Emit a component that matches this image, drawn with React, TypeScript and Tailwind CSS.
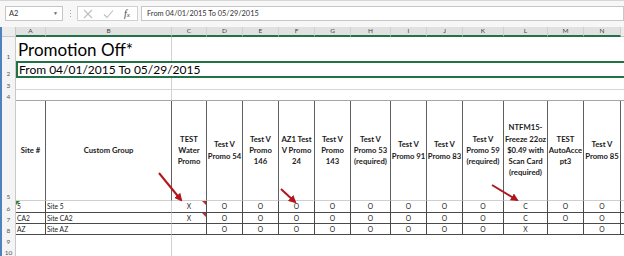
import React from 'react'

const COLS = ['A', 'B', 'C', 'D', 'E', 'F', 'G', 'H', 'I', 'J', 'K', 'L', 'M', 'N', 'O']

// header text of row 5
const HEADERS: Record<string, string> = {
  A: 'Site #',
  B: 'Custom Group',
  C: 'TEST\nWater\nPromo',
  D: 'Test V\nPromo 54',
  E: 'Test V\nPromo\n146',
  F: 'AZ1 Test\nV Promo\n24',
  G: 'Test V\nPromo\n143',
  H: 'Test V\nPromo 53\n(required)',
  I: 'Test V\nPromo 91',
  J: 'Test V\nPromo 83',
  K: 'Test V\nPromo 59\n(required)',
  L: 'NTFM15-\nFreeze 22oz\n$0.49 with\nScan Card\n(required)',
  M: 'TEST\nAutoAcce\npt3',
  N: 'Test V\nPromo 85',
  O: '',
}

// values for columns C..N
const ROWS = [
  { n: 6, site: '5', group: 'Site 5', vals: ['X', 'O', 'O', 'O', 'O', 'O', 'O', 'O', 'O', 'C', 'O', 'O'], flag: true, note: true },
  { n: 7, site: 'CA2', group: 'Site CA2', vals: ['X', 'O', 'O', 'O', 'O', 'O', 'O', 'O', 'O', 'C', 'O', 'O'], flag: false, note: true },
  { n: 8, site: 'AZ', group: 'Site AZ', vals: ['', 'O', 'O', 'O', 'O', 'O', 'O', 'O', 'O', 'X', '', 'O'], flag: false, note: false },
]

function RowHead({ n }: { n: number }) {
  return (
    <div className="flex items-end justify-center border-r border-r-[#c9c9c9] bg-[#f4f4f4] pb-[1px] text-[6.5px] leading-none text-[#555]">
      {n}
    </div>
  )
}

function Arrow({ x1, y1, x2, y2 }: { x1: number; y1: number; x2: number; y2: number }) {
  return <line x1={x1} y1={y1} x2={x2} y2={y2} stroke="#b3151c" strokeWidth={2} markerEnd="url(#ah)" />
}

export default function App() {
  return (
    <div className="relative h-[256px] w-[624px] overflow-hidden bg-white font-['Lato','Open_Sans',sans-serif]">
      {/* formula bar */}
      <div className="flex h-[27px] items-start border-t border-t-[#d6d6d6] bg-[#f7f7f7] pt-[5px]">
        <div className="ml-[5px] flex h-[15px] w-[58px] items-center justify-between border border-[#c6c6c6] bg-white pl-[3px] pr-[4px] text-[7.5px] text-[#333]">
          <span>A2</span>
          <span className="text-[5px] text-[#666]">▼</span>
        </div>
        <div className="ml-[6px] flex h-[15px] w-[3px] flex-col items-center justify-center gap-[2px]">
          <span className="h-[1px] w-[1px] bg-[#aaa]" />
          <span className="h-[1px] w-[1px] bg-[#aaa]" />
          <span className="h-[1px] w-[1px] bg-[#aaa]" />
        </div>
        <div className="ml-[5px] flex h-[15px] w-[61px] items-center border border-[#d0d0d0] bg-white pl-[5px]">
          <svg width="10" height="10" viewBox="0 0 10 10" className="mr-[10px]">
            <path d="M1 1 L9 9 M9 1 L1 9" stroke="#bdbdbd" strokeWidth="1.1" fill="none" />
          </svg>
          <svg width="11" height="10" viewBox="0 0 11 10" className="mr-[10px]">
            <path d="M1 5.5 L4 8.5 L10 1.5" stroke="#bdbdbd" strokeWidth="1.1" fill="none" />
          </svg>
          <span className="font-['Liberation_Serif',serif] text-[10px] italic leading-none text-[#444]">
            f<span className="text-[7px]">x</span>
          </span>
        </div>
        <div className="ml-[3px] flex h-[15px] flex-1 items-center border border-[#c6c6c6] bg-white pl-[5px] text-[7.4px] text-[#333]">
          From 04/01/2015 To 05/29/2015
        </div>
      </div>

      {/* sheet */}
      <div className="flex">
        <div className="w-[2px] shrink-0 bg-[#4f81bd]" />
        <div className="grid shrink-0 grid-cols-[14px_30px_126px_35px_36px_36px_36px_36px_40px_36px_36px_41px_44px_36px_37px_40px] grid-rows-[10px_24px_17px_12px_11px_100px_12px_11px_11px_11px_11px]">
          {/* column letters */}
          <div className="border-r border-b border-r-[#c9c9c9] border-b-[#c9c9c9] bg-[#ececec]" />
          {COLS.map((c) => (
            <div
              key={c}
              className={`flex items-center justify-center border-r border-r-[#d0d0d0] text-[6.5px] text-[#444] ${
                c === 'O' ? 'border-b border-b-[#c9c9c9] bg-[#ececec]' : 'border-b-2 border-b-[#217346] bg-[#e1e1e1]'
              }`}
            >
              {c === 'O' ? '' : c}
            </div>
          ))}

          {/* row 1 */}
          <RowHead n={1} />
          <div className="col-span-2 flex items-end border-r border-r-[#d2d2d2] pb-[3px] pl-[2px] text-[17px] leading-none text-black">
            Promotion Off*
          </div>
          <div className="col-span-13" />

          {/* row 2 */}
          <RowHead n={2} />
          <div className="col-span-15 flex items-center border-2 border-[#217346] pl-[1px] text-[12px] leading-none text-black">
            From 04/01/2015 To 05/29/2015
          </div>

          {/* row 3 */}
          <RowHead n={3} />
          <div className="col-span-2 border-r border-b border-r-[#d2d2d2] border-b-[#d6d6d6]" />
          <div className="col-span-13 border-b border-b-[#d6d6d6]" />

          {/* row 4 */}
          <RowHead n={4} />
          <div className="col-span-2 border-r border-b border-r-[#d2d2d2] border-b-[#a6a6a6]" />
          <div className="col-span-13 border-b border-b-[#a6a6a6]" />

          {/* row 5 - header */}
          <RowHead n={5} />
          {COLS.map((c) => (
            <div
              key={c}
              className="flex items-center justify-center border-r border-b border-r-[#5f5f5f] border-b-[#cfcfcf] text-center text-[7.7px] leading-[11.3px] font-bold whitespace-pre-line text-[#1a1a1a]"
            >
              {HEADERS[c]}
            </div>
          ))}

          {/* rows 6-8 */}
          {ROWS.map((r) => (
            <React.Fragment key={r.n}>
              <RowHead n={r.n} />
              <div className="relative flex items-center border-r border-b border-r-[#4a4a4a] border-b-[#4a4a4a] pl-[1px] text-[6.7px] leading-none text-[#222]">
                {r.flag && (
                  <span className="absolute top-0 left-0 h-0 w-0 border-t-[4px] border-r-[4px] border-t-[#2e8b3e] border-r-transparent" />
                )}
                {r.site}
              </div>
              <div className="flex items-center border-r border-b border-r-[#d2d2d2] border-b-[#4a4a4a] pl-[1px] text-[6.7px] leading-none text-[#222]">
                {r.group}
              </div>
              {r.vals.map((v, i) => (
                <div
                  key={i}
                  className="relative flex items-center justify-center border-r border-b border-r-[#4a4a4a] border-b-[#4a4a4a] text-[6.7px] leading-none text-[#222]"
                >
                  {i === 0 && r.note && (
                    <span className="absolute top-0 right-0 h-0 w-0 border-t-[4px] border-l-[4px] border-t-[#c0282d] border-l-transparent" />
                  )}
                  {v}
                </div>
              ))}
              <div className="border-b border-b-[#4a4a4a]" />
            </React.Fragment>
          ))}

          {/* rows 9-10 */}
          {[9, 10].map((n) => (
            <React.Fragment key={n}>
              <RowHead n={n} />
              <div />
              <div className="border-r border-r-[#d2d2d2]" />
              <div className="col-span-13" />
            </React.Fragment>
          ))}
        </div>
      </div>

      {/* callout arrows */}
      <svg className="pointer-events-none absolute top-0 left-0" width="624" height="256">
        <defs>
          <marker id="ah" markerWidth="4" markerHeight="4" refX="3" refY="2" orient="auto" markerUnits="strokeWidth">
            <path d="M0,0 L4,2 L0,4 z" fill="#b3151c" />
          </marker>
        </defs>
        <Arrow x1={159} y1={173} x2={181} y2={200} />
        <Arrow x1={281} y1={189} x2={295} y2={202} />
        <Arrow x1={492} y1={185} x2={517} y2={200} />
      </svg>
    </div>
  )
}
